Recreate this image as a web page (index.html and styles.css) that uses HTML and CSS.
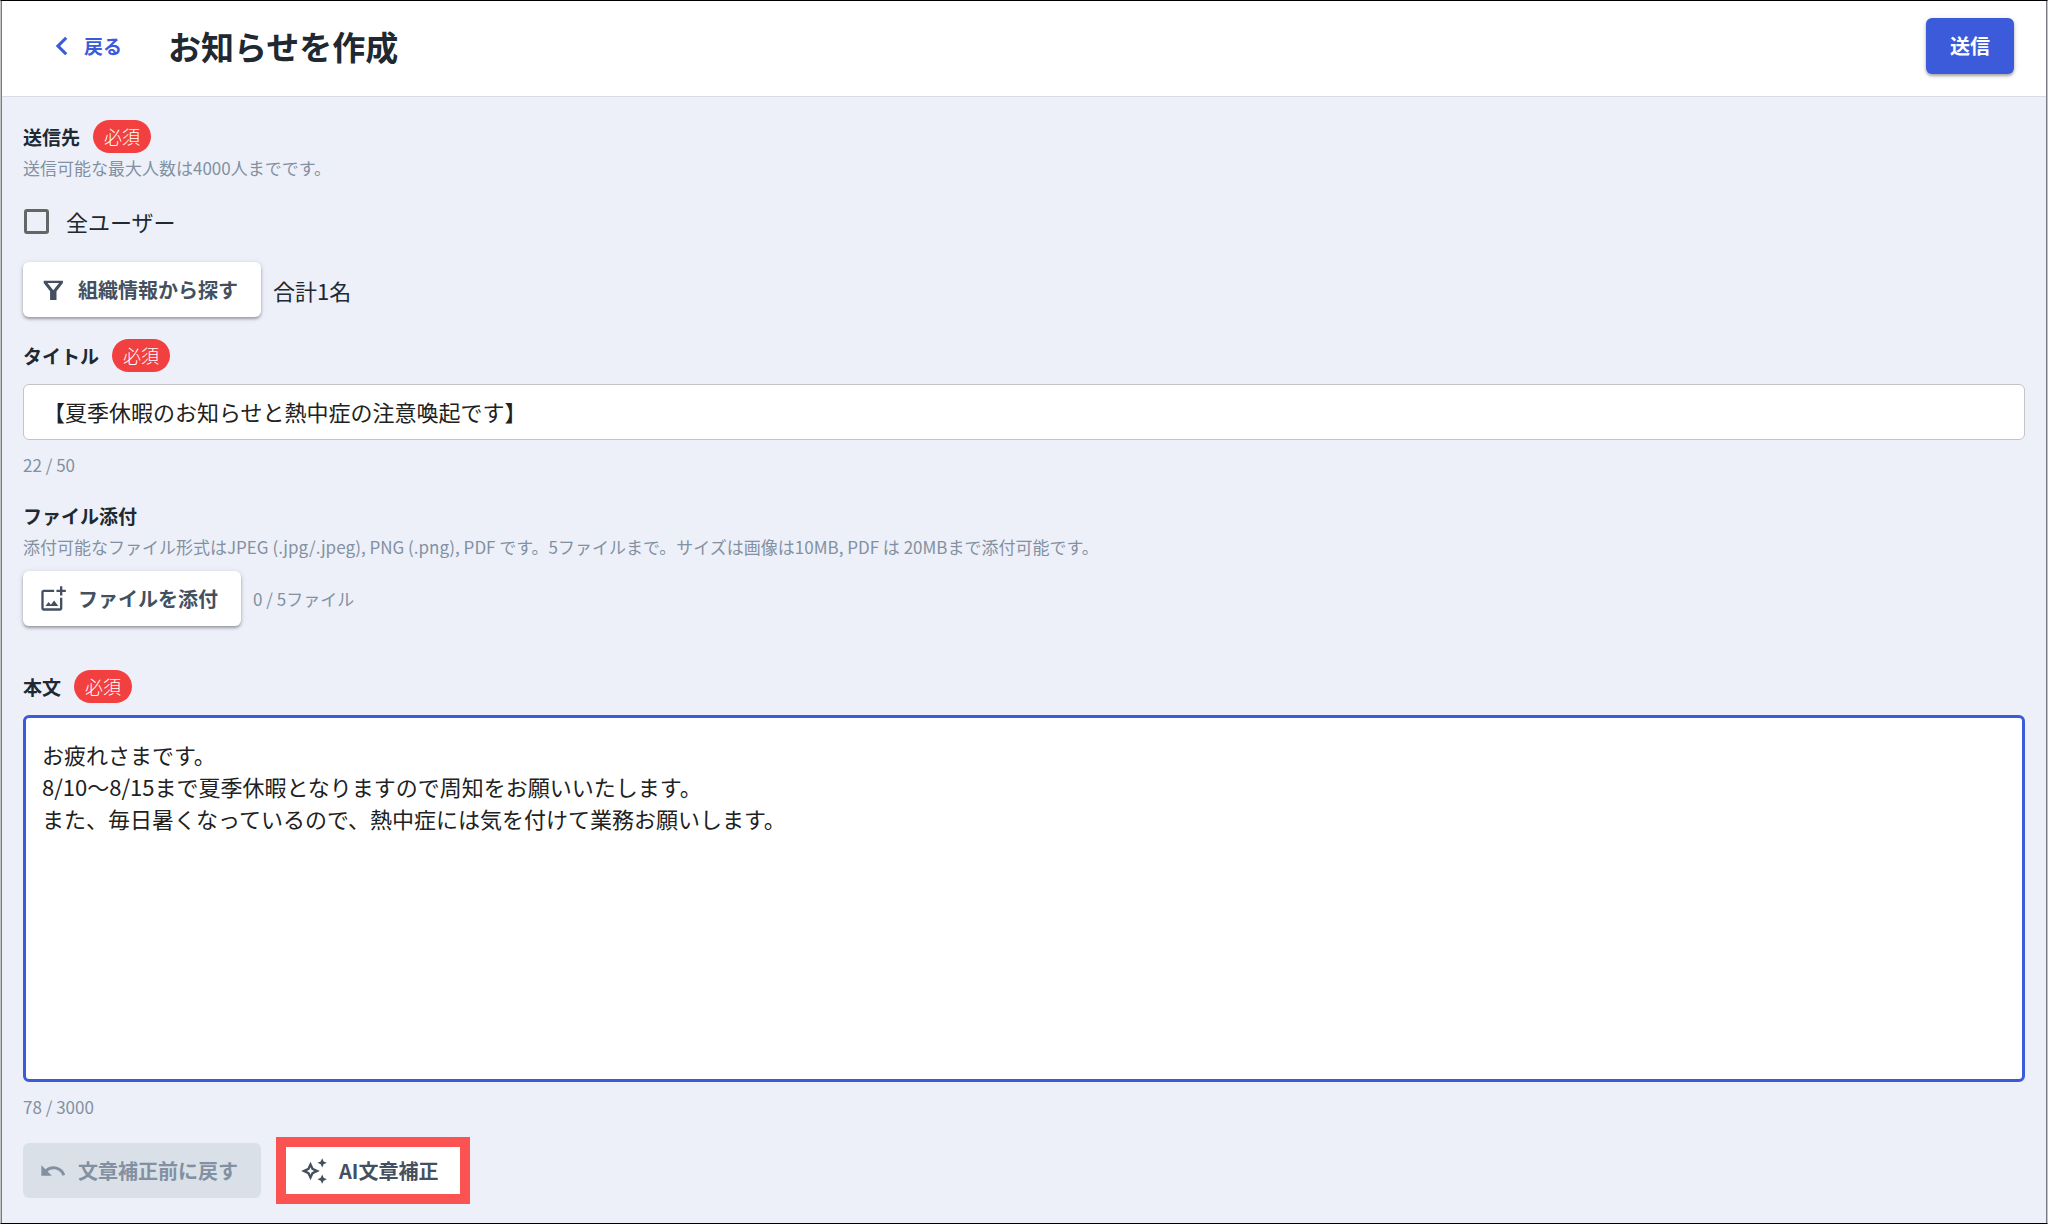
FILE: index.html
```html
<!DOCTYPE html>
<html lang="ja">
<head>
<meta charset="utf-8">
<title>お知らせを作成</title>
<link rel="stylesheet" href="styles.css">
</head>
<body>
<form class="page">
  <header class="header">
    <a class="back" href="#">
      <svg class="icon" viewBox="3 3 18 18"><path d="M15.41 7.41 14 6l-6 6 6 6 1.41-1.41L10.83 12z"/></svg>
      戻る
    </a>
    <h1 class="heading">お知らせを作成</h1>
    <button class="btn btn-primary" type="submit">送信</button>
  </header>

  <main class="content">
    <section class="field">
      <h2 class="label">送信先<span class="badge">必須</span></h2>
      <p class="caption">送信可能な最大人数は4000人までです。</p>
      <label class="check"><input class="checkbox" type="checkbox">全ユーザー</label>
      <div class="row">
        <button class="btn" type="button">
          <svg class="icon" viewBox="0 0 24 24"><path fill-rule="evenodd" d="M4 4h16.500v2L15 13v7.500H9.500V13L4 6zM7.300 6l4.950 6.200L17.200 6z"/></svg>
          組織情報から探す
        </button>
        <span class="total">合計1名</span>
      </div>
    </section>

    <section class="field">
      <label class="label" for="title">タイトル<span class="badge">必須</span></label>
      <input class="input" id="title" type="text" value="【夏季休暇のお知らせと熱中症の注意喚起です】">
      <p class="caption count">22 / 50</p>
    </section>

    <section class="field field-files">
      <h2 class="label">ファイル添付</h2>
      <p class="caption">添付可能なファイル形式はJPEG (.jpg/.jpeg), PNG (.png), PDF です。5ファイルまで。サイズは画像は10MB, PDF は 20MBまで添付可能です。</p>
      <div class="row">
        <button class="btn" type="button">
          <svg class="icon" viewBox="0 0 24 24"><path d="M18 20H4V6h9V4H4c-1.100 0-2 .9-2 2v14c0 1.100.9 2 2 2h14c1.100 0 2-.9 2-2v-9h-2v9zm-7.790-3.170-1.960-2.360L5.500 18h11l-3.540-4.710zM20 4V1h-2v3h-3c.01.010 0 2 0 2h3v2.990c.01.010 2 0 2 0V6h3V4h-3z"/></svg>
          ファイルを添付
        </button>
        <span class="caption">0 / 5ファイル</span>
      </div>
    </section>

    <section class="field">
      <label class="label" for="message">本文<span class="badge">必須</span></label>
      <textarea class="input textarea" id="message">お疲れさまです。
8/10〜8/15まで夏季休暇となりますので周知をお願いいたします。
また、毎日暑くなっているので、熱中症には気を付けて業務お願いします。</textarea>
      <p class="caption count">78 / 3000</p>
      <div class="row actions">
        <button class="btn btn-disabled" type="button" disabled>
          <svg class="icon" viewBox="0 0 24 24"><path d="M12.500 8c-2.650 0-5.050.99-6.900 2.600L2 7v9h9l-3.620-3.620c1.390-1.160 3.160-1.880 5.120-1.880 3.540 0 6.550 2.310 7.600 5.500l2.370-.78C21.080 11.030 17.150 8 12.500 8z"/></svg>
          文章補正前に戻す
        </button>
        <button class="btn btn-highlight" type="button">
          <svg class="icon" viewBox="0 0 24 24"><path d="m19 9 1.250-2.750L23 5l-2.750-1.250L19 1l-1.250 2.750L15 5l2.750 1.250zm0 6-1.250 2.750L15 19l2.750 1.250L19 23l1.250-2.750L23 19l-2.750-1.250zm-7.500-5.500L9 4 6.500 9.500 1 12l5.500 2.500L9 20l2.500-5.500L17 12zm-1.510 3.490L9 15.170l-.99-2.180L5.830 12l2.180-.99L9 8.830l.99 2.180 2.180.99z"/></svg>
          AI文章補正
        </button>
      </div>
    </section>
  </main>
</form>
</body>
</html>
```

FILE: styles.css
```css
* { box-sizing: border-box; }

body {
  margin: 0;
  background: #edf0f9;
  color: #202831;
  font-family: "Noto Sans CJK JP", sans-serif;
}

.page {
  min-height: 100vh;
  display: flex;
  flex-direction: column;
  border: 1px solid #000;
  border-left-color: #c4c4c4;
  border-right-color: #c4c4c4;
  box-shadow: inset 1px 0 #777a80, inset -1px 0 #777a80;
}

h1, h2, p { margin: 0; }

.icon {
  width: 28px;
  height: 28px;
  flex: none;
  fill: currentColor;
}

.header {
  display: flex;
  align-items: center;
  height: 96px;
  margin: 0 1px;
  padding: 0 32px 6px 46px;
  background: #fff;
  border-bottom: 1px solid #d9dce8;
}

.back {
  display: flex;
  align-items: center;
  gap: 8px;
  color: #3c5bdb;
  font-size: 19px;
  font-weight: 700;
  line-height: 28px;
  text-decoration: none;
}

.heading {
  flex: 1;
  margin-left: 46px;
  font-size: 33px;
  font-weight: 700;
  line-height: 48px;
}

.content {
  display: flex;
  flex-direction: column;
  padding: 23px 22px 16px;
}

.field {
  display: flex;
  flex-direction: column;
  margin-bottom: 22px;
}

.field:last-child { margin-bottom: 0; }

.field-files { margin-bottom: 44px; }

.field-files .row { margin-top: 9px; }

.label {
  display: flex;
  align-items: center;
  gap: 13px;
  font-size: 19px;
  font-weight: 700;
  line-height: 33px;
}

.badge {
  padding: 0 11px;
  border-radius: 17px;
  background: #f23f3f;
  color: #fff;
  font-size: 18px;
  font-weight: 300;
}

.caption {
  color: #8290a1;
  font-size: 17px;
  line-height: 30px;
}

.check {
  display: flex;
  align-items: center;
  gap: 17px;
  margin: 21px 0 24px;
  font-size: 22px;
  line-height: 34px;
}

.checkbox {
  appearance: none;
  width: 25px;
  height: 25px;
  margin: 0 0 0 1px;
  border: 3px solid #666;
  border-radius: 3px;
}

.row {
  display: flex;
  align-items: center;
  gap: 12px;
}

.total { font-size: 22px; }

.btn {
  display: flex;
  align-items: center;
  gap: 11px;
  height: 55px;
  padding: 0 23px 0 16px;
  border: 0;
  border-radius: 6px;
  background: #fff;
  color: #445060;
  box-shadow: 0 2px 3px rgba(0, 0, 0, .3), 0 1px 6px rgba(0, 0, 0, .1);
  font-family: inherit;
  font-size: 20px;
  font-weight: 700;
}

.btn-primary {
  height: 56px;
  padding: 0 24px;
  background: #3c5bdb;
  color: #fff;
}

.btn-disabled {
  background: #dae0e8;
  color: #8290a1;
  box-shadow: none;
}

.btn-highlight {
  height: 67px;
  padding: 0 22px 0 14px;
  border: 10px solid #fb5252;
  border-radius: 0;
  box-shadow: none;
}

.input {
  width: 100%;
  height: 56px;
  margin-top: 12px;
  padding: 0 19px 2px;
  border: 1px solid #c4c4c8;
  border-radius: 6px;
  background: #fff;
  color: #212121;
  font-family: inherit;
  font-size: 22px;
}

.textarea {
  display: block;
  height: 367px;
  padding: 20px 16px;
  border: 3px solid #3c5bdb;
  line-height: 32px;
  outline: 0;
  resize: none;
}

.count {
  margin-top: 10px;
}

.count:last-child { margin-bottom: -3px; }

.actions {
  gap: 15px;
  margin-top: 15px;
}
```
